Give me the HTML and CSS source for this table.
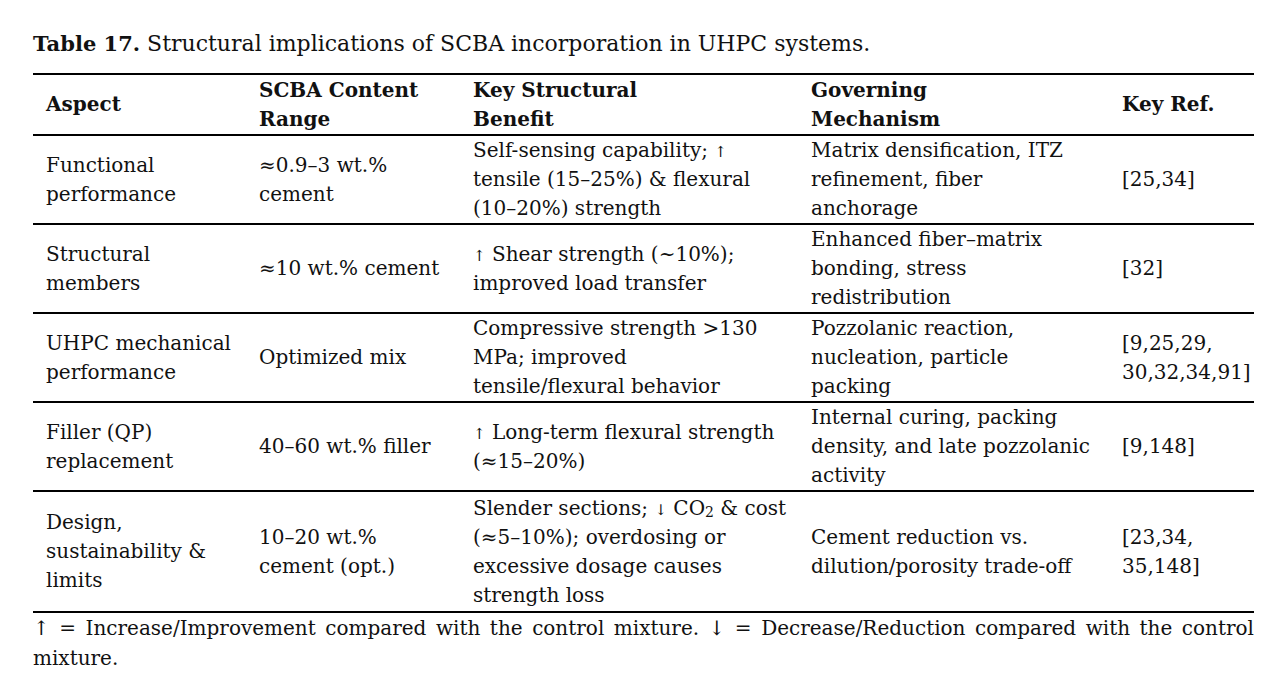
FILE: index.html
```html
<!DOCTYPE html>
<html>
<head>
<meta charset="utf-8">
<link rel="stylesheet" href="styles.css">
</head>
<body>
<div class="page">
  <p class="caption"><b class="lbl">Table 17.</b> Structural implications of SCBA incorporation in UHPC systems.</p>
  <table class="tbl">
    <colgroup>
      <col class="c1"><col class="c2"><col class="c3"><col class="c4"><col class="c5">
    </colgroup>
    <thead>
      <tr>
        <th>Aspect</th>
        <th>SCBA Content<br>Range</th>
        <th>Key Structural<br>Benefit</th>
        <th>Governing<br>Mechanism</th>
        <th>Key Ref.</th>
      </tr>
    </thead>
    <tbody>
      <tr>
        <td>Functional<br>performance</td>
        <td>≈0.9–3 wt.%<br>cement</td>
        <td>Self-sensing capability; <span class="arr">↑</span><br>tensile (15–25%) &amp; flexural<br>(10–20%) strength</td>
        <td>Matrix densification, ITZ<br>refinement, fiber<br>anchorage</td>
        <td>[25,34]</td>
      </tr>
      <tr>
        <td>Structural<br>members</td>
        <td>≈10 wt.% cement</td>
        <td><span class="arr">↑</span> Shear strength (~10%);<br>improved load transfer</td>
        <td>Enhanced fiber–matrix<br>bonding, stress<br>redistribution</td>
        <td>[32]</td>
      </tr>
      <tr>
        <td>UHPC mechanical<br>performance</td>
        <td>Optimized mix</td>
        <td>Compressive strength &gt;130<br>MPa; improved<br>tensile/flexural behavior</td>
        <td>Pozzolanic reaction,<br>nucleation, particle<br>packing</td>
        <td>[9,25,29,<br>30,32,34,91]</td>
      </tr>
      <tr>
        <td>Filler (QP)<br>replacement</td>
        <td>40–60 wt.% filler</td>
        <td><span class="arr">↑</span> Long-term flexural strength<br>(≈15–20%)</td>
        <td>Internal curing, packing<br>density, and late pozzolanic<br>activity</td>
        <td>[9,148]</td>
      </tr>
      <tr class="last">
        <td>Design,<br>sustainability &amp;<br>limits</td>
        <td>10–20 wt.%<br>cement (opt.)</td>
        <td>Slender sections; <span class="arr">↓</span> CO<sub class="sub">2</sub> &amp; cost<br>(≈5–10%); overdosing or<br>excessive dosage causes<br>strength loss</td>
        <td>Cement reduction vs.<br>dilution/porosity trade-off</td>
        <td>[23,34,<br>35,148]</td>
      </tr>
    </tbody>
  </table>
  <p class="note">↑ = Increase/Improvement compared with the control mixture. ↓ = Decrease/Reduction compared with the control mixture.</p>
</div>
</body>
</html>
```

FILE: styles.css
```css
html, body {
  margin: 0;
  padding: 0;
  background: #ffffff;
}
body {
  font-family: "DejaVu Serif", "Liberation Serif", serif;
  color: #111111;
  font-size: 20px;
}
.page {
  width: 1221px;
  margin-left: 33px;
  padding-top: 29px;
}
.caption {
  margin: 0;
  font-size: 22px;
  line-height: 30px;
  height: 44px;
}
.lbl {
  font-size: 21px;
}
.tbl {
  width: 1221px;
  table-layout: fixed;
  border-collapse: collapse;
  border-top: 2px solid #000;
  border-bottom: 2px solid #000;
}
.c1 { width: 213px; }
.c2 { width: 214px; }
.c3 { width: 338px; }
.c4 { width: 311px; }
.c5 { width: 145px; }
.tbl th, .tbl td {
  text-align: left;
  vertical-align: middle;
  padding: 0 0 0 13px;
  line-height: 29px;
  white-space: nowrap;
}
.tbl th {
  font-weight: bold;
  height: 59px;
  border-bottom: 2px solid #000;
}
.tbl td {
  height: 87px;
  border-bottom: 2px solid #000;
}
.tbl tr.last td {
  height: 119px;
  border-bottom: none;
}
.arr {
  font-size: 15px;
  line-height: 1;
}
.sub {
  font-size: 14px;
  vertical-align: baseline;
  position: relative;
  top: 2px;
  line-height: 0;
}
.note {
  margin: 0;
  line-height: 30px;
  text-align: justify;
}
```
